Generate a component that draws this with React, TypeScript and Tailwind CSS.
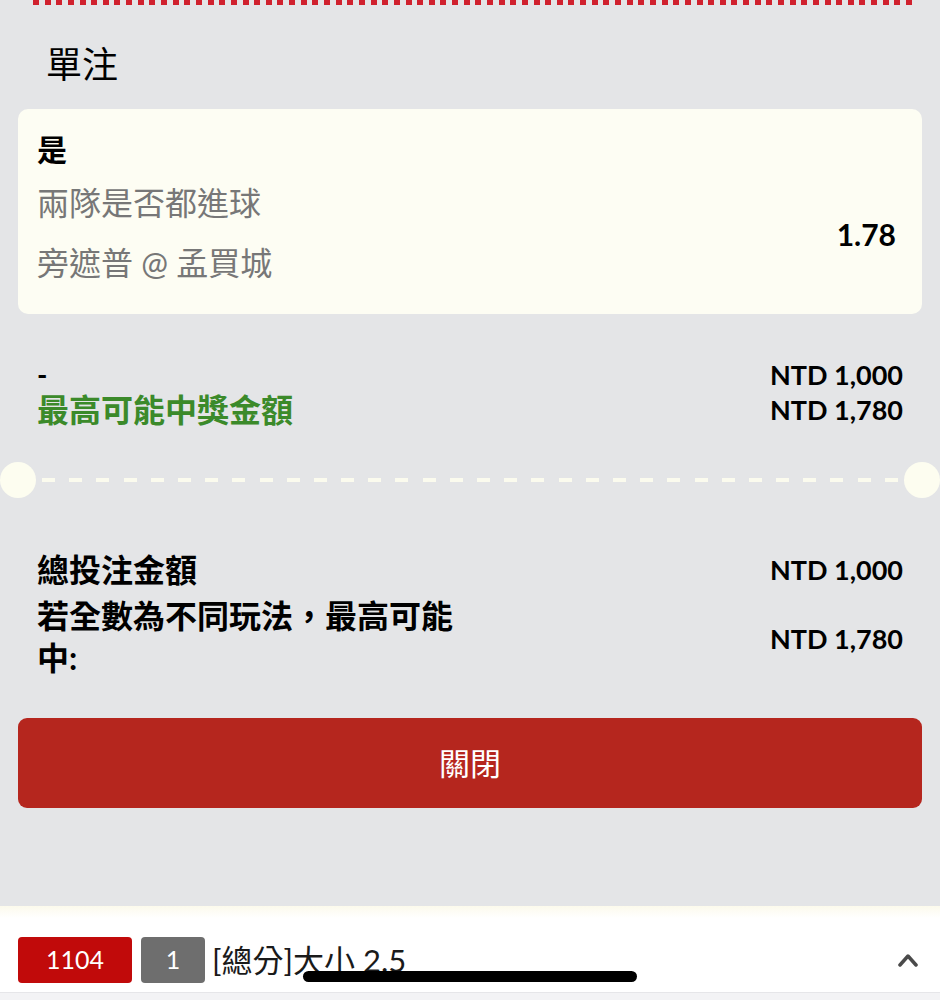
import React from "react";

const dots = Array.from({ length: 76 });
const dashes = Array.from({ length: 32 });

export default function App() {
  return (
    <div className="relative w-[940px] h-[1000px] overflow-hidden bg-[#e4e5e7] flex flex-col font-['Lato','Noto_Sans_CJK_TC',sans-serif] text-black">
      {/* red dotted top edge */}
      <div className="ml-[33px] w-[880px] h-[6px] flex justify-between items-start">
        {dots.map((_, i) => (
          <span key={i} className="block w-[6px] h-[5px] bg-[#d0212e]" />
        ))}
      </div>

      {/* title */}
      <div className="pt-[38px] pl-[46px] text-[36px] leading-[40px] font-normal">單注</div>

      {/* selection card */}
      <div className="mt-[25px] mx-[18px] h-[205px] rounded-[10px] bg-[#fdfdf3] pt-[20px] pl-[19px] pr-[26px]">
        <div className="text-[30px] leading-[40px] font-bold">是</div>
        <div className="flex items-center justify-between">
          <div className="text-[#777777] text-[32px]">
            <div className="mt-[13px] leading-[41px]">兩隊是否都進球</div>
            <div className="mt-[19px] leading-[41px]">旁遮普 @ 孟買城</div>
          </div>
          <div className="text-[30px] font-bold leading-[40px] mt-[16px]">1.78</div>
        </div>
      </div>

      {/* stake / max win */}
      <div className="mt-[43px] px-[37px] flex justify-between">
        <div className="flex flex-col">
          <div className="text-[28px] font-bold leading-[35px]">-</div>
          <div className="text-[32px] font-bold leading-[35px] text-[#3b8a2a]">最高可能中獎金額</div>
        </div>
        <div className="flex flex-col items-end text-[27px] font-bold leading-[35px]">
          <div>NTD 1,000</div>
          <div>NTD 1,780</div>
        </div>
      </div>

      {/* ticket divider */}
      <div className="mt-[35px] h-[36px] flex items-center">
        <div className="w-[36px] h-[36px] rounded-full bg-[#fdfdf0] shrink-0" />
        <div className="flex-1 flex justify-between px-[6px]">
          {dashes.map((_, i) => (
            <span key={i} className="block w-[13px] h-[4px] bg-[#fbfbee]" />
          ))}
        </div>
        <div className="w-[36px] h-[36px] rounded-full bg-[#fdfdf0] shrink-0" />
      </div>

      {/* totals */}
      <div className="mt-[52px] px-[37px] flex flex-col gap-[6px]">
        <div className="flex justify-between items-center">
          <div className="text-[32px] font-bold leading-[40px]">總投注金額</div>
          <div className="text-[27px] font-bold leading-[40px]">NTD 1,000</div>
        </div>
        <div className="flex justify-between items-center">
          <div className="w-[430px] text-[32px] font-bold leading-[40px]">
            <div>若全數為不同玩法，最高可能</div>
            <div className="mt-[2px]">中:</div>
          </div>
          <div className="text-[27px] font-bold leading-[40px] mt-[4px]">NTD 1,780</div>
        </div>
      </div>

      {/* close button */}
      <div className="mt-[40px] mx-[18px]">
        <button className="w-full h-[90px] rounded-[9px] bg-[#b5261e] text-white text-[31px] font-normal flex items-center justify-center">
          關閉
        </button>
      </div>

      <div className="flex-1" />

      {/* bottom bet bar */}
      <div className="h-[94px] flex flex-col bg-white">
        <div className="h-[12px] bg-gradient-to-b from-[#fcfaec] to-white" />
        <div className="h-[74px] pt-[19px] pl-[18px] pr-[22px] flex items-start">
          <div className="w-[114px] h-[46px] rounded-[4px] bg-[#c10a0a] text-white text-[25px] flex items-center justify-center">1104</div>
          <div className="ml-[9px] w-[64px] h-[46px] rounded-[4px] bg-[#6e6e6e] text-white text-[25px] flex items-center justify-center">1</div>
          <div className="ml-[7px] h-[46px] flex items-center text-[31px] text-[#1a1a1a]">[總分]大小 2.5</div>
          <div className="flex-1" />
          <div className="h-[46px] flex items-center">
            <svg width="20" height="14" viewBox="0 0 20 14" fill="none">
              <polyline points="2,12 10,3 18,12" stroke="#4a4a4a" strokeWidth="3.5" strokeLinecap="round" strokeLinejoin="round" />
            </svg>
          </div>
        </div>
        <div className="flex-1 border-t border-[#e6e6e9] bg-[#f3f3f5]" />
      </div>

      {/* iOS home indicator */}
      <div className="absolute left-[303px] top-[971px] w-[334px] h-[11px] rounded-full bg-black" />
    </div>
  );
}
